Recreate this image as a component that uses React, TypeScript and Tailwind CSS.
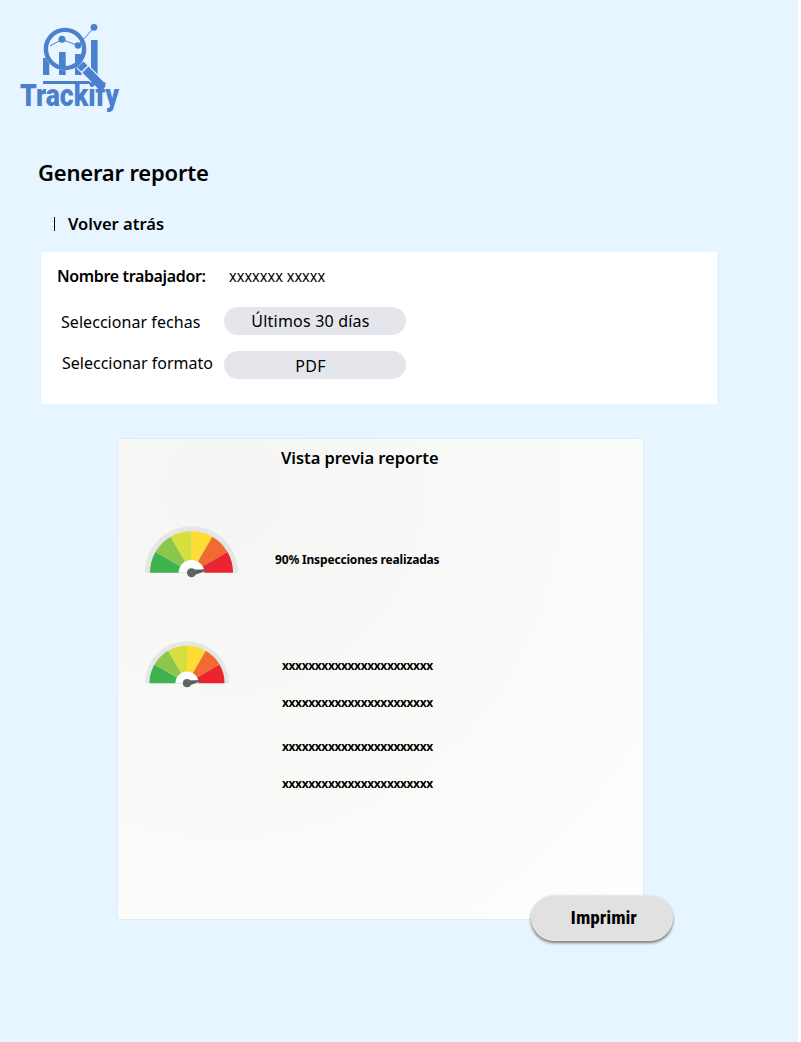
import React from "react";

function Logo() {
  return (
    <svg width="112" height="100" viewBox="0 0 112 100" className="block" fill="#4a80cc" stroke="none">
      <rect x="26" y="38" width="6.3" height="17" />
      <rect x="42" y="32" width="6.7" height="23" />
      <rect x="58" y="34" width="6.7" height="21" />
      <rect x="74" y="20" width="6.6" height="37" />
      <rect x="26" y="61" width="50" height="3" />
      <circle cx="48" cy="29" r="21.3" fill="#e6f5ff" />
      <rect x="42" y="32" width="6.7" height="14" />
      <rect x="58" y="34" width="6.7" height="8" />
      <path d="M33 26 45 19.5 61 25.5 77 7.5" fill="none" stroke="#4a80cc" strokeWidth="1" />
      <circle cx="45" cy="19.3" r="3.5" />
      <circle cx="61" cy="25.5" r="3.3" />
      <circle cx="77" cy="7.3" r="3.4" />
      <circle cx="48" cy="29" r="19.1" fill="none" stroke="#4a80cc" strokeWidth="4.4" />
      <path d="M63.500 44.500 84 65.500" fill="none" stroke="#e6f5ff" strokeWidth="11" />
      <path d="M63.500 44.500 83.500 65" fill="none" stroke="#4a80cc" strokeWidth="8.5" />
      <circle cx="84" cy="65.500" r="4.200" />
      <path d="m64.500 52.500 7.500-7.500" fill="none" stroke="#e6f5ff" strokeWidth="1.4" />
      <text x="3" y="86" fontSize="30.500" fontWeight="900" fontFamily="Roboto, sans-serif" textLength="99" lengthAdjust="spacingAndGlyphs">
        Trackify
      </text>
    </svg>
  );
}

const wedges = [
  { fill: "#41b34e", d: "M47 48H5A42 42 0 0 1 10.6 27Z" },
  { fill: "#8dc64c", d: "M47 48 10.6 27A42 42 0 0 1 26 11.6Z" },
  { fill: "#d5df3e", d: "M47 48 26 11.6A42 42 0 0 1 47 6Z" },
  { fill: "#fddc36", d: "M47 48V6A42 42 0 0 1 68 11.6Z" },
  { fill: "#f16a31", d: "M47 48 68 11.6A42 42 0 0 1 83.4 27Z" },
  { fill: "#ec2430", d: "M47 48 83.4 27A42 42 0 0 1 89 48Z" },
];

function Gauge({ className }: { className: string }) {
  return (
    <svg viewBox="0 0 94 53" className={className}>
      <path d="M0 48A47 47 0 0 1 94 48Z" fill="#e5e6e6" />
      {wedges.map((w) => (
        <path key={w.fill} d={w.d} fill={w.fill} />
      ))}
      <path d="M34 48A13 13 0 0 1 60 48Z" fill="#fff" />
      <path d="M46.5 45 66 44.5 48 51Z" fill="#5b5c5e" />
      <circle cx="47" cy="48" r="4.6" fill="#626366" />
    </svg>
  );
}

export default function App() {
  return (
    <main className="flex h-[1042px] w-[798px] flex-col overflow-hidden bg-[#e6f5ff] font-['Noto_Sans',sans-serif] whitespace-nowrap text-black">
      <header className="pt-5 pl-[17px]">
        <Logo />
      </header>
      <h1 className="mt-9 ml-[38px] text-[22px] leading-8 font-semibold tracking-[-0.2px]">Generar reporte</h1>
      <div className="mt-6 flex h-6 items-center pl-[52px] leading-6">
        <span className="flex w-4 pl-0.5">
          <span className="h-[14px] w-px bg-black" />
        </span>
        <a className="text-[16.5px] font-semibold">Volver atrás</a>
      </div>

      <section className="mt-4 ml-[41px] h-[152px] w-[676px] bg-white">
        <div className="flex h-12 items-center pl-4">
          <span className="w-[172px] text-[16px] font-semibold tracking-[-0.36px]">Nombre trabajador:</span>
          <span className="origin-left scale-x-[.91] text-[16px]">xxxxxxx xxxxx</span>
        </div>
        <div className="mt-[7px] flex h-7 items-center pl-5">
          <span className="w-[163px] pt-0.5 text-[16px] tracking-[0.05px]">Seleccionar fechas</span>
          <button className="h-7 w-[182px] rounded-full bg-[#e5e6eb] pr-[9px] text-[16px] tracking-[0.2px]">Últimos 30 días</button>
        </div>
        <div className="mt-4 flex h-7 items-center pl-[21px]">
          <span className="w-[162px] pb-[5px] text-[16px]">Seleccionar formato</span>
          <button className="h-7 w-[182px] rounded-full bg-[#e5e6eb] pt-0.5 pr-[9px] text-[16px] tracking-[0.3px]">PDF</button>
        </div>
      </section>

      <section className="mt-[35px] ml-[118px] h-[480px] w-[525px] bg-radial-[at_20%_10%] from-[#f5f6f4] to-[#fefefd] shadow-[0_0_1px_#b8c8d0]">
        <h2 className="pt-[7px] pl-[163px] text-[16.5px] leading-6 font-semibold tracking-[-0.05px]">Vista previa reporte</h2>
        <div className="mt-[55px] flex pl-[27px]">
          <Gauge className="h-[53px] w-[93px]" />
          <p className="mt-[25px] ml-[37px] text-[12px] leading-5 font-bold tracking-[-0.17px]">90% Inspecciones realizadas</p>
        </div>
        <div className="mt-[62px] flex pl-[27px]">
          <Gauge className="h-[48px] w-[84px]" />
          <div className="mt-4 ml-[53px] text-[12px] leading-5 font-bold tracking-[-0.38px]">
            <p>xxxxxxxxxxxxxxxxxxxxxxx</p>
            <p className="mt-[17px]">xxxxxxxxxxxxxxxxxxxxxxx</p>
            <p className="mt-6">xxxxxxxxxxxxxxxxxxxxxxx</p>
            <p className="mt-[17px]">xxxxxxxxxxxxxxxxxxxxxxx</p>
          </div>
        </div>
      </section>
      <button className="relative -mt-6 ml-[531px] h-[46px] w-[142px] shrink-0 rounded-full border border-[#e9e9e9] bg-[#e1e1e1] pl-1 shadow-[0_2px_3px_#777]">
        <span className="inline-block scale-x-[.85] font-[Roboto] text-[19px] font-black tracking-[0.5px]">Imprimir</span>
      </button>
    </main>
  );
}
